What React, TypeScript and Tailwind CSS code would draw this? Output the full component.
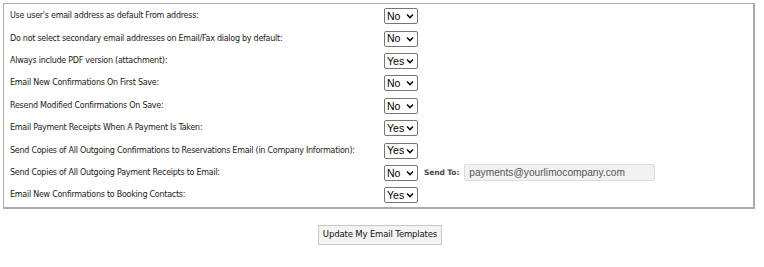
import React from "react";

const rows: { label: string; value: string; sendTo?: boolean }[] = [
  { label: "Use user's email address as default From address:", value: "No" },
  { label: "Do not select secondary email addresses on Email/Fax dialog by default:", value: "No" },
  { label: "Always include PDF version (attachment):", value: "Yes" },
  { label: "Email New Confirmations On First Save:", value: "No" },
  { label: "Resend Modified Confirmations On Save:", value: "No" },
  { label: "Email Payment Receipts When A Payment Is Taken:", value: "Yes" },
  { label: "Send Copies of All Outgoing Confirmations to Reservations Email (in Company Information):", value: "Yes" },
  { label: "Send Copies of All Outgoing Payment Receipts to Email:", value: "No", sendTo: true },
  { label: "Email New Confirmations to Booking Contacts:", value: "Yes" },
];

function FakeSelect({ value }: { value: string }) {
  return (
    <div className="flex h-[16px] w-[34px] items-center justify-between rounded-[2px] border border-[#767676] bg-white pl-[2px] pr-[3px] text-[10.5px] leading-none text-black [font-family:'Liberation_Sans',Arial,sans-serif]">
      <span>{value}</span>
      <svg width="8" height="6" viewBox="0 0 8 6" className="shrink-0">
        <path d="M1 1.5 L4 4.5 L7 1.5" fill="none" stroke="#111" strokeWidth="1.6" />
      </svg>
    </div>
  );
}

export default function App() {
  return (
    <div className="h-[267px] w-[764px] bg-white [font-family:'DejaVu_Sans',Tahoma,sans-serif]">
      <div className="ml-[3px] mt-[3px] w-[752px] border-l border-t border-r-2 border-b-2 border-[#ababab] pt-[1px]">
        {rows.map((r, i) => (
          <div key={i} className="flex h-[22.4px] items-center">
            <div className="w-[380px] pl-[6px] text-[8px] tracking-[-0.26px] text-[#1a1a1a]">{r.label}</div>
            <FakeSelect value={r.value} />
            {r.sendTo && (
              <div className="flex items-center">
                <span className="ml-[6px] mr-[5px] text-[7.5px] font-bold tracking-[-0.1px] text-[#444]">Send To:</span>
                <div className="flex h-[17px] w-[191px] items-center rounded-[2px] border border-[#dcdcdc] bg-[#f2f2f2] pl-[4px] text-[10.2px] text-[#555] [font-family:'Liberation_Sans',Arial,sans-serif]">
                  payments@yourlimocompany.com
                </div>
              </div>
            )}
          </div>
        ))}
      </div>
      <div className="mt-[16px] flex justify-center pr-[4px]">
        <button className="h-[20px] w-[124px] border border-[#c8c8c8] bg-[#f4f4f4] text-[8.5px] tracking-[-0.15px] text-[#111]">
          Update My Email Templates
        </button>
      </div>
    </div>
  );
}
